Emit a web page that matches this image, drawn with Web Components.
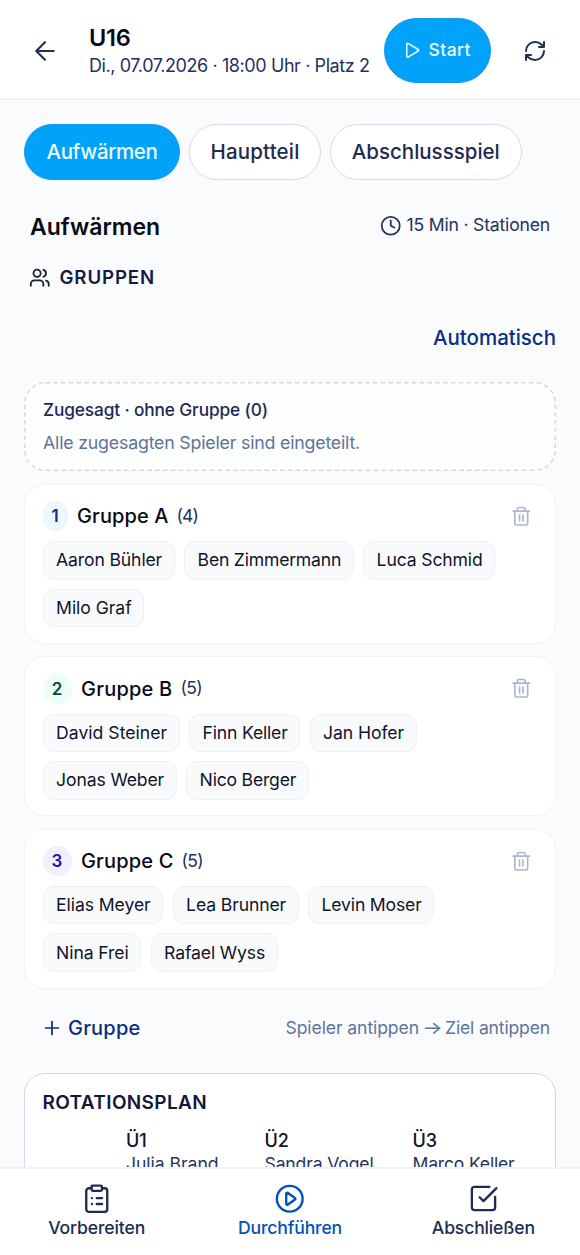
<!DOCTYPE html>
<html lang="de">
<head>
<meta charset="utf-8">
<title>U16 Training</title>
<style>
html,body{margin:0;height:100%}
body{font-family:Inter,"Liberation Sans",sans-serif;background:#f9fbfd;color:#0b0f1f}
</style>
</head>
<body>
<training-app></training-app>
<script>
const define = (name, html, setup) => customElements.define(name, class extends HTMLElement {
  constructor() {
    super();
    this.attachShadow({ mode: 'open' });
  }
  connectedCallback() {
    const t = document.createElement('template');
    t.innerHTML = typeof html === 'function' ? html(this) : html;
    this.shadowRoot.replaceChildren(t.content.cloneNode(true));
    if (setup) setup(this);
  }
});

/* Label whose tracking is tuned so that it fills the width in "w". */
define('ui-text', el => `<style>
:host{display:block;flex:none;white-space:nowrap;line-height:1.3;width:${el.getAttribute('w')}px}
span{display:inline-block}
</style><span></span>`, el => {
  const span = el.shadowRoot.querySelector('span');
  const text = el.getAttribute('text');
  span.textContent = text;
  const rest = +el.getAttribute('w') - span.getBoundingClientRect().width;
  span.style.letterSpacing = (rest / text.length) + 'px';
});

const ICONS = {
  back: '<path d="M12 19l-7-7 7-7M19 12H5"/>',
  refresh: '<path d="M3 12a9 9 0 0 1 9-9 9.75 9.75 0 0 1 6.74 2.74L21 8M21 3v5h-5M21 12a9 9 0 0 1-9 9 9.75 9.75 0 0 1-6.74-2.74L3 16M8 16H3v5"/>',
  play: '<path d="M4 3.2v17.6a1.3 1.3 0 0 0 2 1.1l14.6-8.8a1.3 1.3 0 0 0 0-2.2L6 2.1a1.3 1.3 0 0 0-2 1.1z"/>',
  clock: '<circle cx="12" cy="12" r="10"/><path d="M12 6v6l4 2"/>',
  users: '<path d="M16 21v-2a4 4 0 0 0-4-4H6a4 4 0 0 0-4 4v2M22 21v-2a4 4 0 0 0-3-3.87M16 3.13a4 4 0 0 1 0 7.75"/><circle cx="9" cy="7" r="4"/>',
  trash: '<path d="M2.5 6h19M4.5 6v14.5a1.7 1.7 0 0 0 1.7 1.7h11.6a1.7 1.7 0 0 0 1.7-1.7V6M7.5 6V3.6A1.8 1.8 0 0 1 9.3 1.8h5.4a1.8 1.8 0 0 1 1.8 1.8V6M10 10.5v7M14 10.5v7"/>',
  plus: '<path d="M5 12h14M12 5v14"/>',
  clipboard: '<rect x="8" y="2" width="8" height="4" rx="1"/><path d="M16 4h2a2 2 0 0 1 2 2v14a2 2 0 0 1-2 2H6a2 2 0 0 1-2-2V6a2 2 0 0 1 2-2h2M12 11.5h4M12 16h4M8.3 11.5h.01M8.3 16h.01"/>',
  circleplay: '<circle cx="12" cy="12" r="9.8"/><path d="M9.3 8.1v7.8a.7.7 0 0 0 1.1.6l5.6-3.9a.7.7 0 0 0 0-1.2l-5.6-3.9a.7.7 0 0 0-1.1.6z"/>',
  check: '<path d="M21 10.7V19a2 2 0 0 1-2 2H5a2 2 0 0 1-2-2V5a2 2 0 0 1 2-2h11.5M9 11l3 3L22 4"/>'
};
define('ui-icon', el => `<style>
:host{display:block;flex:none;width:${el.getAttribute('size')}px;height:${el.getAttribute('size')}px}
svg{display:block;width:100%;height:100%;overflow:visible}
</style><svg viewBox="0 0 24 24" fill="none" stroke="currentColor" stroke-width="${el.getAttribute('stroke') || 2}" stroke-linecap="round" stroke-linejoin="round">${ICONS[el.getAttribute('name')]}</svg>`);

define('app-header', `<style>
:host{display:flex;flex:none;box-sizing:border-box;height:100px;border-bottom:2px solid #eef2f7;background:#fff;align-items:center;padding:3px 33px 0 29.5px;color:#1f2f55}
.info{margin-left:29.5px;flex:1}
.name{font-size:23.5px;font-weight:600;color:#070a12;height:31px;margin-top:1px}
.sub{font-size:18px;height:25px;color:#26305f}
.start{display:flex;align-items:center;box-sizing:border-box;width:107px;height:65px;border-radius:33px;background:#00a2fa;border:1px solid #1497ee;color:#eef9ff;padding-left:19.5px;gap:8px;font-size:17.5px;font-weight:500}
.refresh{margin-left:32.5px}
</style>
<ui-icon name="back" size="30" stroke="1.7"></ui-icon>
<div class="info"><ui-text class="name" w="41.5" text="U16"></ui-text><ui-text class="sub" w="280.5" text="Di., 07.07.2026 · 18:00 Uhr · Platz 2"></ui-text></div>
<div class="start"><ui-icon name="play" size="16.5" stroke="2.2"></ui-icon><ui-text w="42.5" text="Start"></ui-text></div>
<ui-icon class="refresh" name="refresh" size="24"></ui-icon>`);

define('phase-tab', el => `<style>
:host{display:flex;box-sizing:border-box;height:56.5px;border:1.5px solid #d6dce6;border-radius:29px;background:#fff;color:#1e2b4e;align-items:center;justify-content:center;font-size:20.5px;font-weight:500;padding-top:1.5px;width:${el.getAttribute('box')}px}
:host([active]){background:#00a2fa;border-color:#1497ee;color:#eef9ff}
</style><ui-text w="${el.getAttribute('w')}" text="${el.getAttribute('text')}"></ui-text>`);

define('player-chip', el => `<style>
:host{display:flex;box-sizing:border-box;width:${el.getAttribute('box')}px;height:38.5px;border:1.5px solid #edf1f6;border-radius:11px;background:#f9fafc;align-items:center;justify-content:center;font-size:17.6px;color:#10142a;padding-top:.8px}
ui-text{margin-left:1.2px}
</style><ui-text w="${el.getAttribute('box') - 26}" text="${el.getAttribute('name')}"></ui-text>`);

define('group-card', el => `<style>
:host{display:block;box-sizing:border-box;height:160px;border:1.5px solid #eff2f7;border-radius:21px;background:#fff;padding:16.2px 24px 0 17.5px;margin-bottom:12.4px}
.head{display:flex;align-items:center;height:30px;margin-bottom:10px}
.no{display:flex;align-items:center;justify-content:center;height:30px;border-radius:15px;font-size:17px;font-weight:600;background:var(--tint);color:var(--ink);width:${el.getAttribute('badge')}px;margin-right:9.5px}
.title{font-size:20px;font-weight:500;color:#080b16}
.count{font-size:17.5px;color:#26305f;margin-left:8px}
ui-icon{margin-left:auto;color:#a9b6ce}
.list{display:flex;flex-wrap:wrap;gap:9px 9.5px}
</style>
<div class="head"><span class="no">${el.getAttribute('no')}</span><ui-text class="title" w="${el.getAttribute('w')}" text="${el.getAttribute('title-text')}"></ui-text><ui-text class="count" w="21.5" text="${el.getAttribute('count')}"></ui-text><ui-icon name="trash" size="20.5" stroke="1.9"></ui-icon></div>
<div class="list"><slot></slot></div>`);

define('unassigned-box', `<style>
:host{display:block;position:relative;box-sizing:border-box;height:89px;border-radius:21px;background:#fdfefe;padding:17px 19px 0;margin-bottom:13px}
svg{position:absolute;inset:0;width:100%;height:100%}
.a{font-size:17.3px;font-weight:500;color:#1c2a58;height:32px}
.b{font-size:17.8px;color:#60749a}
</style><svg><rect x=".75" y=".75" width="530.5" height="87.5" rx="20.5" fill="none" stroke="#d3dae5" stroke-width="1.5" stroke-dasharray="4.6 3.2"/></svg>
<ui-text class="a" w="225" text="Zugesagt · ohne Gruppe (0)"></ui-text>
<ui-text class="b" w="317" text="Alle zugesagten Spieler sind eingeteilt."></ui-text>`);

define('rotation-plan', `<style>
:host{display:block;box-sizing:border-box;height:200px;border:1.5px solid #d0d9e7;border-radius:21px;background:#fff;padding:16.5px 17.5px 0}
.h{font-size:19px;font-weight:600;color:#12183a;height:38px}
.cols{display:grid;grid-template-columns:83.5px 138.5px 148px 1fr}
.u{font-size:18px;font-weight:500;color:#0f1328;height:24.5px}
.n{font-size:17.6px;color:#28345f}
</style><ui-text class="h" w="164.5" text="ROTATIONSPLAN"></ui-text>
<div class="cols"><span></span>
<div><ui-text class="u" w="20.5" text="Ü1"></ui-text><ui-text class="n" w="92.5" text="Julia Brand"></ui-text></div>
<div><ui-text class="u" w="24.5" text="Ü2"></ui-text><ui-text class="n" w="109" text="Sandra Vogel"></ui-text></div>
<div><ui-text class="u" w="24.5" text="Ü3"></ui-text><ui-text class="n" w="102" text="Marco Keller"></ui-text></div></div>`);

define('nav-item', el => `<style>
:host{display:flex;flex-direction:column;align-items:center;color:#202d52;font-size:17.6px;font-weight:500}
:host([active]){color:#0053b8}
.ic{height:32px;display:flex;align-items:center;margin-bottom:2.5px}
</style><div class="ic"><ui-icon name="${el.getAttribute('icon')}" size="${el.getAttribute('size')}" stroke="1.8"></ui-icon></div><ui-text w="${el.getAttribute('w')}" text="${el.getAttribute('text')}"></ui-text>`);

define('bottom-nav', `<style>
:host{display:grid;flex:none;grid-template-columns:repeat(3,1fr);box-sizing:border-box;height:88px;border-top:2px solid #eff2f6;background:#fff;padding-top:13.5px}
</style>
<nav-item icon="clipboard" size="31.5" w="97" text="Vorbereiten"></nav-item>
<nav-item icon="circleplay" size="31.5" w="104" text="Durchführen" active></nav-item>
<nav-item icon="check" size="31" w="103" text="Abschließen"></nav-item>`);

define('training-app', `<style>
:host{display:flex;flex-direction:column;height:1255px;width:580px;overflow:hidden}
main{flex:1;min-height:0;overflow:hidden;padding:23.5px 24px 0}
.tabs{display:flex;gap:9px}
.row{display:flex;align-items:center;justify-content:space-between}
.head{margin-top:31px;height:34px;padding:0 6px 0 6px}
.title{font-size:23px;font-weight:600;color:#0a0c14}
.meta{display:flex;align-items:center;gap:5px;font-size:17.6px;color:#27325a;margin-top:-5px}
.groups{display:flex;align-items:center;gap:9px;height:28px;margin:19px 0 0 5px;font-size:18.7px;font-weight:600;color:#141c46}
.groups ui-text{margin-top:1px}
.auto{display:flex;justify-content:flex-end;align-items:center;height:30px;margin:31.5px 0 28.5px;font-size:20.5px;font-weight:500;color:#0b2e84}
.actions{height:40px;margin:0 6px 25px 17px;padding-top:7px}
.add{display:flex;align-items:center;gap:5px;font-size:20px;font-weight:500;color:#0b2e84}
.hint{display:flex;font-size:17.6px;color:#60749a}
.arrow{transform:scaleX(1.2);margin:0 5px 0 5px}
</style>
<app-header></app-header>
<main>
<div class="tabs"><phase-tab box="156" w="111" text="Aufwärmen" active></phase-tab><phase-tab box="132" w="89" text="Hauptteil"></phase-tab><phase-tab box="191.5" w="148" text="Abschlussspiel"></phase-tab></div>
<div class="row head"><ui-text class="title" w="130" text="Aufwärmen"></ui-text><div class="meta"><ui-icon name="clock" size="21.5"></ui-icon><ui-text w="143.5" text="15 Min · Stationen"></ui-text></div></div>
<div class="groups"><ui-icon name="users" size="21.5" style="color:#1a2036"></ui-icon><ui-text w="95.5" text="GRUPPEN"></ui-text></div>
<div class="auto"><ui-text w="123" text="Automatisch"></ui-text></div>
<unassigned-box></unassigned-box>
<group-card style="--tint:#edf7ff;--ink:#0c2c8a" no="1" badge="25" title-text="Gruppe A" w="91.5" count="(4)">
<player-chip box="132" name="Aaron Bühler"></player-chip><player-chip box="169.5" name="Ben Zimmermann"></player-chip><player-chip box="132" name="Luca Schmid"></player-chip><player-chip box="101.5" name="Milo Graf"></player-chip>
</group-card>
<group-card style="--tint:#ecfdf6;--ink:#07493c" no="2" badge="29" title-text="Gruppe B" w="91.5" count="(5)">
<player-chip box="137" name="David Steiner"></player-chip><player-chip box="111" name="Finn Keller"></player-chip><player-chip box="107" name="Jan Hofer"></player-chip><player-chip box="134" name="Jonas Weber"></player-chip><player-chip box="122.5" name="Nico Berger"></player-chip>
</group-card>
<group-card style="--tint:#eef1ff;--ink:#2412a5" no="3" badge="29" title-text="Gruppe C" w="92.5" count="(5)">
<player-chip box="120.5" name="Elias Meyer"></player-chip><player-chip box="126" name="Lea Brunner"></player-chip><player-chip box="126" name="Levin Moser"></player-chip><player-chip box="98.5" name="Nina Frei"></player-chip><player-chip box="127" name="Rafael Wyss"></player-chip>
</group-card>
<div class="row actions"><div class="add"><ui-icon name="plus" size="22" stroke="1.9"></ui-icon><ui-text w="72.5" text="Gruppe"></ui-text></div><div class="hint"><ui-text w="133.5" text="Spieler antippen"></ui-text><ui-text class="arrow" w="16" text="→"></ui-text><ui-text w="105" text="Ziel antippen"></ui-text></div></div>
<rotation-plan></rotation-plan>
</main>
<bottom-nav></bottom-nav>`);
</script>
</body>
</html>
